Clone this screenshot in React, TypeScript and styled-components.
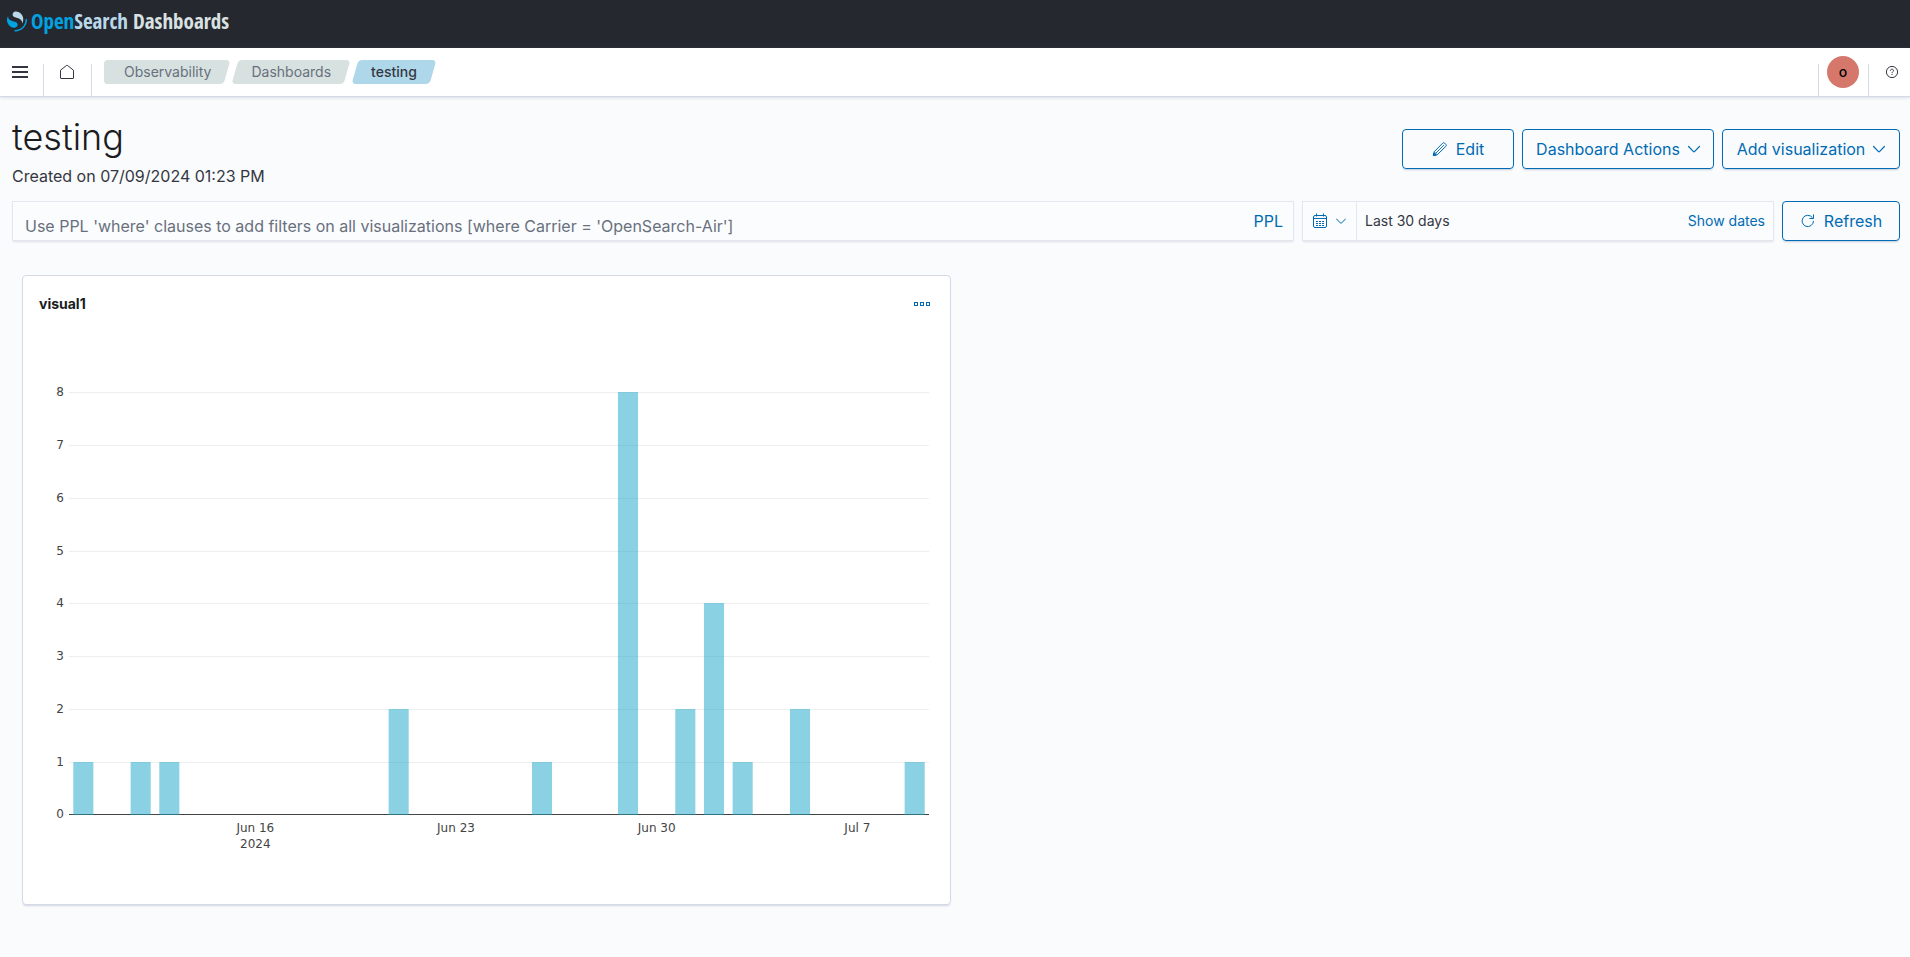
import React from "react";
import styled, { createGlobalStyle, css } from "styled-components";

const blue = "#006bb4";
const ink = "#343741";
const line = "#d3dae6";
const fieldLine = "#e3e6ef";

const GlobalStyle = createGlobalStyle`
  *, *::before, *::after { box-sizing: border-box; }
  body {
    margin: 0;
    min-height: 100vh;
    background: #fafbfd;
    color: ${ink};
    font-family: Inter, "Liberation Sans", sans-serif;
    font-size: 16px;
    line-height: 24px;
  }
  button, input { font: inherit; color: inherit; }
  svg { display: block; flex: none; }
`;

const BrandBar = styled.header`
  height: 48px;
  padding: 0 7px;
  background: #25282f;
  display: flex;
  align-items: center;
`;

const Brand = styled.a`
  display: flex;
  align-items: center;
  gap: 4px;
  padding-bottom: 6px;
  text-decoration: none;
`;

const BrandText = styled.span`
  font-family: "Open Sans Condensed", "Noto Sans Condensed", "Liberation Sans Narrow", "Liberation Sans", sans-serif;
  font-size: 21px;
  font-weight: 700;
  line-height: 24px;
  white-space: nowrap;
  color: #d9e1e2;
`;

const BrandPart = styled.span<{ $tone: string }>`
  color: ${(p) => p.$tone};
`;

const NavBar = styled.nav`
  position: relative;
  display: flex;
  align-items: stretch;
  height: 49px;
  background: #fff;
  border-bottom: 1px solid ${line};
  box-shadow: 0 1px 3px rgba(152, 162, 179, 0.3);
`;

const NavCell = styled.div<{ $width: number; $rule?: "left" | "right"; $pad?: string }>`
  width: ${(p) => p.$width}px;
  padding: ${(p) => p.$pad ?? "0"};
  display: flex;
  align-items: center;
  justify-content: center;
  background: ${(p) => (p.$rule ? `linear-gradient(${line}, ${line}) ${p.$rule} bottom / 1px 32px no-repeat` : "none")};
`;

const IconButton = styled.button`
  display: flex;
  align-items: center;
  justify-content: center;
  padding: 0;
  border: 0;
  background: none;
  color: ${ink};
  cursor: pointer;
`;

const Crumbs = styled.ol`
  display: flex;
  align-items: center;
  gap: 2px;
  flex: 1;
  margin: 0 12px;
  padding: 0;
  list-style: none;
`;

const Crumb = styled.a<{ $first?: boolean; $current?: boolean }>`
  position: relative;
  z-index: 0;
  display: block;
  height: 24px;
  padding: 0 19px 0 ${(p) => (p.$first ? 20 : 19)}px;
  font-size: 14px;
  line-height: 24px;
  font-weight: ${(p) => (p.$current ? 500 : 400)};
  color: ${(p) => (p.$current ? ink : "#69707d")};
  text-decoration: none;

  &::before {
    content: "";
    position: absolute;
    z-index: -1;
    inset: 0 3px;
    border-radius: 4px;
    transform: skewX(-16deg);
    background: ${(p) => (p.$current ? "#afd7ea" : "#d6e1e0")};
  }

  ${(p) =>
    p.$first &&
    css`
      &::after {
        content: "";
        position: absolute;
        z-index: -1;
        inset: 0 20px 0 0;
        border-radius: 4px;
        background: #d6e1e0;
      }
    `}
`;

const Avatar = styled.button`
  width: 32px;
  height: 32px;
  padding: 0;
  border: 0;
  border-radius: 50%;
  background: #d6776c;
  color: #000;
  font-size: 14px;
  font-weight: 500;
  line-height: 32px;
  text-align: center;
`;

const Page = styled.main`
  padding: 20px 10px 48px 12px;
`;

const TitleRow = styled.div`
  display: flex;
  align-items: center;
  justify-content: space-between;
`;

const PageTitle = styled.h1`
  margin: 0 0 7px;
  font-size: 36px;
  line-height: 40px;
  font-weight: 300;
  color: #1a1c21;
`;

const Created = styled.p`
  margin: 0;
`;

const Actions = styled.div`
  display: flex;
  gap: 8px;
  padding-bottom: 8px;
`;

const Button = styled.button<{ $width: number }>`
  display: flex;
  align-items: center;
  justify-content: center;
  flex: none;
  gap: 8px;
  width: ${(p) => p.$width}px;
  height: 40px;
  padding: 0;
  border: 1px solid ${blue};
  border-radius: 4px;
  background: transparent;
  color: ${blue};
  white-space: nowrap;
  box-shadow: 0 2px 2px -1px rgba(54, 97, 126, 0.3);
  cursor: pointer;
`;

const FilterRow = styled.div`
  display: flex;
  gap: 8px;
  margin-top: 13px;
`;

const Field = styled.div<{ $width?: number }>`
  display: flex;
  align-items: center;
  height: 40px;
  ${(p) => (p.$width ? `flex: none; width: ${p.$width}px;` : "flex: 1; min-width: 0;")}
  border: 1px solid ${fieldLine};
  background: #fbfcfd;
  box-shadow: 0 2px 2px -1px rgba(152, 162, 179, 0.3);
`;

const QueryInput = styled.input`
  flex: 1;
  min-width: 0;
  height: 38px;
  padding: 10px 12px 0;
  border: 0;
  outline: 0;
  background: none;
  &::placeholder { color: #69707d; opacity: 1; }
`;

const LinkButton = styled.button<{ $small?: boolean }>`
  border: 0;
  padding: 0 ${(p) => (p.$small ? 8 : 10)}px;
  background: none;
  color: ${blue};
  font-size: ${(p) => (p.$small ? 14 : 16)}px;
  white-space: nowrap;
`;

const QuickSelect = styled.button`
  display: flex;
  align-items: center;
  justify-content: center;
  gap: 8px;
  width: 54px;
  height: 38px;
  padding: 0 2px 0 0;
  border: 0;
  border-right: 1px solid ${fieldLine};
  background: none;
  color: ${blue};
`;

const RangeButton = styled.button`
  flex: 1;
  padding: 0 8px;
  border: 0;
  background: none;
  font-size: 14px;
  text-align: left;
`;

const PanelGrid = styled.div`
  display: grid;
  grid-template-columns: 1fr 1fr;
  gap: 10px;
  margin-top: 34px;
  padding: 0 10px;
`;

const Panel = styled.section`
  border: 1px solid ${line};
  border-radius: 4px;
  background: #fff;
  box-shadow: 0 2px 2px -1px rgba(152, 162, 179, 0.4);
`;

const PanelHead = styled.div`
  display: flex;
  align-items: center;
  justify-content: space-between;
  padding: 16px 20px 0 16px;
`;

const PanelTitle = styled.h2`
  margin: 0;
  font-size: 14px;
  line-height: 24px;
  font-weight: 700;
  color: #1a1c21;
`;

const ChartSvg = styled.svg`
  width: 100%;
  height: auto;
  font-family: "DejaVu Sans", sans-serif;
  font-size: 12px;
`;

const counts: [number, number][] = [
  [0, 1], [2, 1], [3, 1], [11, 2], [16, 1], [19, 8], [21, 2], [22, 4], [23, 1], [25, 2], [29, 1],
];
const weeks: [number, string, string?][] = [[6, "Jun 16", "2024"], [13, "Jun 23"], [20, "Jun 30"], [27, "Jul 7"]];

const plot = { left: 46, right: 906, top: 76, bottom: 498 };
const day = (plot.right - plot.left) / 30;
const unit = (plot.bottom - plot.top) / 8;
const xAt = (d: number) => plot.left + day * (d + 0.5);
const yAt = (v: number) => Math.ceil(plot.bottom - unit * v);

function BarChart() {
  return (
    <ChartSvg viewBox="0 0 927 588" role="img" aria-label="Count per day, last 30 days">
      {[0, 1, 2, 3, 4, 5, 6, 7, 8].map((v) => (
        <g key={v}>
          <rect
            x={plot.left}
            y={yAt(v)}
            width={plot.right - plot.left}
            height="1"
            fill={v ? "#eee" : "#444"}
          />
          <text x="41" y={yAt(v) + 4} textAnchor="end" fill="#444">{v}</text>
        </g>
      ))}
      {counts.map(([d, v]) => (
        <rect
          key={d}
          x={xAt(d) - day * 0.35}
          y={yAt(v)}
          width={day * 0.7}
          height={plot.bottom + 1 - yAt(v)}
          fill="#16a3ca"
          fillOpacity="0.5"
        />
      ))}
      {weeks.map(([d, label, year]) => (
        <text key={d} y="516" textAnchor="middle" fill="#444">
          <tspan x={xAt(d)}>{label}</tspan>
          {year && <tspan x={xAt(d)} dy="16">{year}</tspan>}
        </text>
      ))}
    </ChartSvg>
  );
}

const Chevron = ({ size = 12 }: { size?: number }) => (
  <svg width={size} height={size} viewBox="0 0 12 12" fill="none" stroke="currentColor" strokeWidth="1.2" strokeLinecap="round" strokeLinejoin="round">
    <path d="M.6 3.5 5.5 8.6a.7.7 0 0 0 1 0l4.900-5.100" />
  </svg>
);

const Logo = () => (
  <svg width="20" height="21" viewBox="0 0 64 64">
    <path fill="#00a3e0" d="M61.74 23.5c-1.25 0-2.27 1.01-2.27 2.26 0 18.62-15.09 33.71-33.71 33.71a2.26 2.26 0 0 0 0 4.53C46.88 64 64 46.88 64 25.76c0-1.25-1.01-2.26-2.26-2.26Z" />
    <path fill="#b9d9eb" d="M48.08 38c2.18-3.55 4.28-8.28 3.87-14.91C51.09 9.37 38.66-1.04 26.92.08c-4.6.45-9.31 4.19-8.89 10.9.18 2.92 1.6 4.64 3.92 5.96 2.21 1.26 5.05 2.06 8.26 2.96 3.89 1.09 8.39 2.32 11.85 4.87 4.15 3.06 6.99 6.6 6.02 13.23Z" />
    <path fill="#00a3e0" d="M3.92 14C1.74 17.55-.36 22.28.05 28.91c.86 13.72 13.29 24.14 25.03 23.01 4.59-.45 9.31-4.19 8.89-10.9-.18-2.92-1.61-4.64-3.92-5.96-2.21-1.26-5.05-2.06-8.26-2.96-3.89-1.09-8.39-2.32-11.85-4.87C5.79 24.17 2.95 20.63 3.92 14Z" />
  </svg>
);

export default function App() {
  return (
    <>
      <GlobalStyle />
      <BrandBar>
        <Brand href="#" aria-label="OpenSearch Dashboards">
          <Logo />
          <BrandText>
            <BrandPart $tone="#00a3e0">Open</BrandPart>
            <BrandPart $tone="#b9d9eb">Search</BrandPart> Dashboards
          </BrandText>
        </Brand>
      </BrandBar>

      <NavBar aria-label="Main">
        <NavCell $width={44} $rule="right" $pad="0 4px 0 0">
          <IconButton aria-label="Toggle navigation">
            <svg width="16" height="12" viewBox="0 0 16 12" fill="currentColor">
              <path d="M0 0h16v2H0zM0 5h16v2H0zM0 10h16v2H0z" />
            </svg>
          </IconButton>
        </NavCell>
        <NavCell $width={48} $rule="right" $pad="0 2px 0 0">
          <IconButton aria-label="Home">
            <svg width="16" height="16" viewBox="0 0 16 16" fill="none" stroke="currentColor">
              <path d="M2 14.5a.5.5 0 0 1-.5-.5V6.2l6.200-4.900a.5.5 0 0 1 .6 0l6.200 4.900V14a.5.5 0 0 1-.5.5z" />
            </svg>
          </IconButton>
        </NavCell>
        <Crumbs>
          <li><Crumb href="#" $first>Observability</Crumb></li>
          <li><Crumb href="#">Dashboards</Crumb></li>
          <li><Crumb href="#" $current aria-current="page">testing</Crumb></li>
        </Crumbs>
        <NavCell $width={50} $rule="left">
          <Avatar aria-label="Account menu">o</Avatar>
        </NavCell>
        <NavCell $width={42} $rule="left" $pad="0 0 0 6px">
          <IconButton aria-label="Help">
            <svg width="14" height="14" viewBox="0 0 14 14" fill="none" stroke="currentColor">
              <circle cx="7" cy="7" r="5.600" />
              <path d="M5.400 5.800c0-1 .7-1.600 1.600-1.600s1.600.6 1.600 1.400c0 1.100-1.600 1.200-1.600 2.500" />
              <path d="M7 9v1" />
            </svg>
          </IconButton>
        </NavCell>
      </NavBar>

      <Page>
        <TitleRow>
          <div>
            <PageTitle>testing</PageTitle>
            <Created>Created on 07/09/2024 01:23 PM</Created>
          </div>
          <Actions>
            <Button $width={112}>
              <svg width="16" height="16" viewBox="0 0 16 16" fill="none" stroke="currentColor" strokeLinejoin="round">
                <path d="M1.500 14.500 2.200 10.800 10.600 2.200a1.500 1.500 0 0 1 2.100 0l1.100 1.100a1.500 1.500 0 0 1 0 2.100L5.200 13.800z" />
                <path d="M2.200 10.800 5.200 13.800M3.700 12.300l8.300-8.300" strokeWidth=".9" />
                <path d="M1.300 14.700 1.900 12l2.100 2.100z" fill="currentColor" />
              </svg>
              Edit
            </Button>
            <Button $width={192}>Dashboard Actions <Chevron /></Button>
            <Button $width={178}>Add visualization <Chevron /></Button>
          </Actions>
        </TitleRow>

        <FilterRow>
          <Field>
            <QueryInput
              aria-label="PPL filter"
              placeholder="Use PPL 'where' clauses to add filters on all visualizations [where Carrier = 'OpenSearch-Air']"
            />
            <LinkButton>PPL</LinkButton>
          </Field>
          <Field $width={472}>
            <QuickSelect aria-label="Date quick select">
              <svg width="16" height="16" viewBox="0 0 16 16" fill="none" stroke="currentColor">
                <rect x="1.500" y="2.500" width="13" height="12" rx="1.500" />
                <path d="M4.500.5v3M11.500.5v3M1.500 5.500h13" />
                <path d="M4 8.500h2M7 8.500h2M10 8.500h2M4 10.500h2M7 10.500h2M10 10.500h2M4 12.500h2M7 12.500h2M10 12.500h2" />
              </svg>
              <Chevron size={10} />
            </QuickSelect>
            <RangeButton>Last 30 days</RangeButton>
            <LinkButton $small>Show dates</LinkButton>
          </Field>
          <Button $width={118}>
            <svg width="16" height="16" viewBox="0 0 16 16" fill="none" stroke="currentColor" strokeLinecap="round" strokeLinejoin="round">
              <path d="M13.500 8.300A5.700 5.700 0 1 1 12.200 4.300M13.500 1.800v3.700H9.800" />
            </svg>
            Refresh
          </Button>
        </FilterRow>

        <PanelGrid>
          <Panel>
            <PanelHead>
              <PanelTitle>visual1</PanelTitle>
              <IconButton aria-label="Panel options">
                <svg width="16" height="4" viewBox="0 0 16 4" fill="none" stroke={blue} shapeRendering="crispEdges">
                  <path d="M.5.5h3v3h-3zM6.500.5h3v3h-3zM12.500.5h3v3h-3z" />
                </svg>
              </IconButton>
            </PanelHead>
            <BarChart />
          </Panel>
        </PanelGrid>
      </Page>
    </>
  );
}
